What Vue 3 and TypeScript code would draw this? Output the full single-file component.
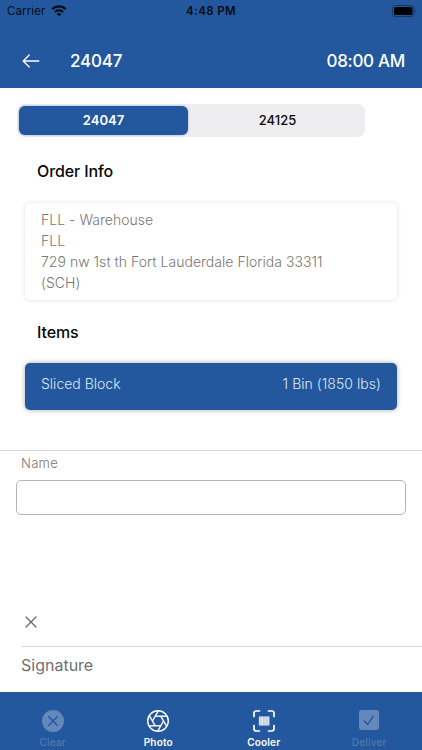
<script setup lang="ts">
import { ref } from 'vue'

const orders = ['24047', '24125']
const active = ref('24047')
const address = ['FLL - Warehouse', 'FLL', '729 nw 1st th Fort Lauderdale Florida 33311', '(SCH)']
const signer = ref('')
const blades = [0, 60, 120, 180, 240, 300]
const bars = [
  { x: 7, w: 1.6, o: 0.55 },
  { x: 8.6, w: 0.8, o: 0.3 },
  { x: 9.4, w: 2, o: 0.7 },
  { x: 12.2, w: 2.6, o: 0.5 },
  { x: 15.4, w: 1.8, o: 0.6 },
]
</script>

<template>
  <div class="screen">
    <header class="header">
      <div class="status">
        <span class="carrier">Carrier</span>
        <svg class="wifi" viewBox="0 0 16 12" width="16" height="12">
          <path d="M1.3 4.2C5 .5 11 .5 14.7 4.2" fill="none" stroke="#050a12" stroke-width="2.3" />
          <path d="M3.9 7C6.2 4.8 9.8 4.8 12.1 7" fill="none" stroke="#050a12" stroke-width="2.1" />
          <path d="M8 11.3 5.6 8.9C7 7.7 9 7.7 10.4 8.9Z" fill="#050a12" />
        </svg>
        <span class="clock">4:48 PM</span>
        <svg class="battery" viewBox="0 0 25 12" width="25" height="12">
          <rect x=".5" y=".5" width="21.5" height="11" rx="3" fill="none" stroke="#153763" />
          <rect x="2" y="2" width="18.5" height="8" rx="1.6" fill="#000" />
          <path d="M23.3 4.2c1.3.5 1.3 3.1 0 3.6Z" fill="#153763" />
        </svg>
      </div>
      <div class="nav">
        <svg class="back" viewBox="0 0 18 14" width="18" height="14" fill="none" stroke="#fff" stroke-width="1.3" stroke-linecap="round" stroke-linejoin="round">
          <path d="M7.2 1 1.2 7l6 6M1.4 7h15.4" />
        </svg>
        <h1 class="title">24047</h1>
        <span class="slot">08:00 AM</span>
      </div>
    </header>

    <main class="main">
      <div class="segments">
        <button v-for="o in orders" :key="o" class="segment" :class="{ on: o === active }" @click="active = o">{{ o }}</button>
      </div>
      <h2 class="heading">Order Info</h2>
      <section class="card">
        <p v-for="line in address" :key="line">{{ line }}</p>
      </section>
      <h2 class="heading items">Items</h2>
      <section class="item">
        <span>Sliced Block</span>
        <span class="amount">1 Bin (1850 lbs)</span>
      </section>
    </main>

    <section class="sign">
      <label class="name" for="signer">Name</label>
      <input id="signer" v-model="signer" class="field" type="text" />
      <div class="pad">
        <svg viewBox="0 0 12 12" width="12" height="12" stroke="#666" stroke-width="1.3" stroke-linecap="round">
          <path d="M1 1l10 10M11 1 1 11" />
        </svg>
      </div>
      <div class="caption">Signature</div>
    </section>

    <footer class="tabs">
      <div class="tab off">
        <svg viewBox="0 0 24 24" width="24" height="24">
          <circle cx="12" cy="12" r="11" fill="#6488ba" />
          <path d="m7.8 7.8 8.4 8.4m0-8.4-8.4 8.4" stroke="#2458a0" stroke-width="1.5" stroke-linecap="round" />
        </svg>
        <span>Clear</span>
      </div>
      <div class="tab">
        <svg viewBox="0 0 24 24" width="24" height="24" fill="none" stroke="#fff" stroke-width="1.4">
          <circle cx="12" cy="12" r="10.3" />
          <path v-for="b in blades" :key="b" d="M9.2 7.2H21" :transform="`rotate(${b} 12 12)`" />
        </svg>
        <span>Photo</span>
      </div>
      <div class="tab">
        <svg viewBox="0 0 24 24" width="24" height="24" fill="none">
          <path d="M2 7.5V4.2Q2 2 4.2 2h3.3M16.5 2h3.3Q22 2 22 4.2v3.3M22 16.5v3.3q0 2.2-2.2 2.2h-3.3M7.5 22H4.2Q2 22 2 19.8v-3.3" stroke="#fff" stroke-width="1.7" stroke-linecap="round" />
          <rect x="6.8" y="7.5" width="10.6" height="9" fill="#fff" opacity=".6" />
          <rect v-for="b in bars" :key="b.x" :x="b.x" y="7.5" :width="b.w" height="9" fill="#fff" :opacity="b.o" />
        </svg>
        <span>Cooler</span>
      </div>
      <div class="tab off">
        <svg viewBox="0 0 24 24" width="24" height="24">
          <rect x="2" y="1" width="20" height="20" rx="2.4" fill="#6488ba" />
          <path d="m7.2 11.7 3.3 3.6 6-8.4" fill="none" stroke="#2458a0" stroke-width="1.4" stroke-linecap="round" stroke-linejoin="round" />
        </svg>
        <span>Deliver</span>
      </div>
    </footer>
  </div>
</template>

<style>
body { margin: 0; background: #fff; }
</style>

<style scoped>
* { box-sizing: border-box; }
.screen { width: 422px; height: 750px; display: flex; flex-direction: column; background: #fff; font-family: Inter, "Liberation Sans", sans-serif; overflow: hidden; }
.header { height: 88px; flex: none; background: #24589e; }
.status { height: 22px; display: flex; align-items: center; padding: 0 5px 0 7px; color: #050a12; font-size: 11.5px; }
.carrier { width: 37px; letter-spacing: 0.1px; }
.wifi { margin-left: 7px; margin-top: -1px; }
.clock { margin-left: 119px; width: 54px; font-weight: 600; letter-spacing: 0.4px; white-space: nowrap; }
.battery { margin-left: auto; margin-top: -1px; }
.nav { height: 66px; display: flex; align-items: center; padding: 0 17px 0 22px; color: #fff; }
.back, .title, .slot { margin-top: 12px; margin-bottom: 0; }
.title { margin-left: 30px; font-size: 17px; font-weight: 500; letter-spacing: -0.2px; }
.slot { margin-left: auto; font-size: 17px; font-weight: 500; letter-spacing: -0.3px; }
.main { height: 362px; flex: none; padding: 16px 25px 0; }
.segments { width: 348px; height: 33px; margin-left: -8px; padding: 2px; display: flex; background: #ededef; border-radius: 8px; }
.segment { flex: 1; border: 0; border-radius: 6px; padding: 0 0 1px 4px; background: none; color: #0b0b0b; font: 500 13px Inter, sans-serif; }
.segment.on { flex: none; width: 169px; padding-left: 0; color: #fff; background: #24589e; font-weight: 600; box-shadow: 0 0 2px #24589e88; }
.heading { margin: 23px 0 0 12px; font-size: 16px; line-height: 22px; font-weight: 500; letter-spacing: -0.1px; color: #080808; }
.card { height: 97px; margin-top: 21px; padding: 6px 16px 0; border-radius: 5px; background: #fff; box-shadow: 0 0 4px rgba(0, 0, 0, 0.13); color: #777; font-size: 14px; font-weight: 300; line-height: 21px; letter-spacing: 0.03px; }
.card p { margin: 0; white-space: nowrap; }
.heading.items { margin-top: 21px; }
.item { height: 47px; margin-top: 20px; padding: 0 17px 6px 16px; display: flex; justify-content: space-between; align-items: center; border-radius: 5px; background: #24589e; box-shadow: 0 0 5px rgba(0, 0, 0, 0.35); color: #dce7f5; font-size: 14px; font-weight: 300; }
.amount { letter-spacing: 0.05px; margin-right: -1px; }
.sign { height: 242px; flex: none; border-top: 1px solid #d6d6d6; display: flex; flex-direction: column; }
.name { margin: 3px 0 0 21px; font-size: 13px; line-height: 18px; font-weight: 300; letter-spacing: 0.3px; color: #777; }
.field { height: 35px; margin: 8px 16px 0 16px; border: 1px solid #b4b4b4; border-radius: 5px; background: #fff; outline: none; }
.pad { height: 132px; margin-left: 21px; padding: 0 0 18px 4px; border-bottom: 1px solid #d9d9d9; display: flex; align-items: flex-end; }
.caption { margin: 7px 0 0 21px; font-size: 16px; line-height: 22px; color: #717171; }
.tabs { height: 58px; flex: none; display: grid; grid-template-columns: repeat(4, 1fr); background: #24589e; }
.tab { display: flex; flex-direction: column; align-items: center; padding-top: 17px; color: #fff; font-size: 10px; line-height: 14px; font-weight: 600; letter-spacing: 0.2px; }
.tab span { margin-top: 2px; }
.tab.off { color: #5078ae; font-weight: 500; }
</style>
